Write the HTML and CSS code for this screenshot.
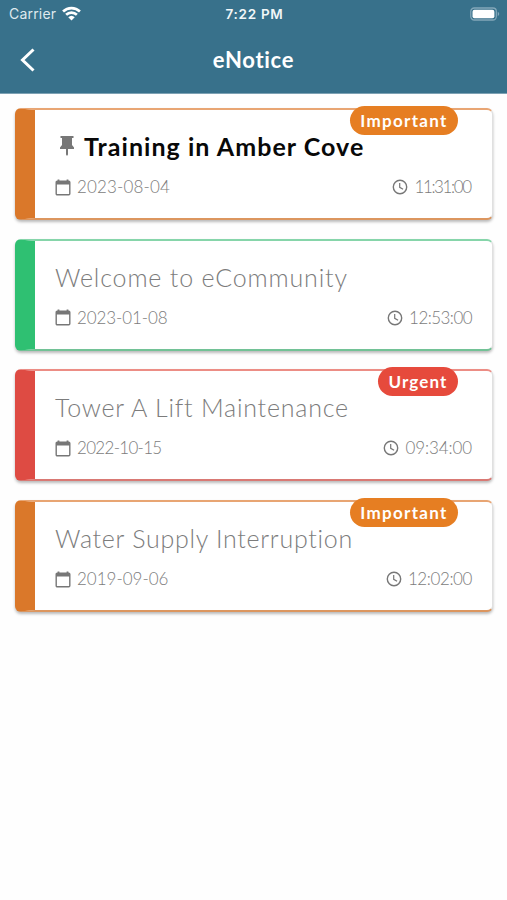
FILE: index.html
```html
<!DOCTYPE html>
<html lang="en">
<head>
<meta charset="utf-8">
<title>eNotice</title>
<link rel="stylesheet" href="styles.css">
</head>
<body>
<svg class="defs" aria-hidden="true">
  <symbol id="cal" viewBox="0 0 16 17"><path d="M2.2 2.2h11.6a1 1 0 0 1 1 1v11.6a1 1 0 0 1-1 1H2.2a1 1 0 0 1-1-1V3.200a1 1 0 0 1 1-1z" fill="none" stroke="currentColor" stroke-width="1.4"/><path d="M1 2h14v3.600H1zM2.600.5h1.800v2H2.600zM11.600.5h1.800v2h-1.800z" fill="currentColor"/></symbol>
  <symbol id="clock" viewBox="0 0 16 16"><circle cx="8" cy="8" r="6.700" fill="none" stroke="currentColor" stroke-width="1.4"/><path d="M7.700 4v4.300l3.400 2" fill="none" stroke="currentColor" stroke-width="1.200"/></symbol>
</svg>
<header class="top">
  <div class="status">
    <div class="carrier"><span>Carrier</span>
      <svg class="wifi" viewBox="0 0 18 14"><g fill="none" stroke="#fff" stroke-width="2.500"><path d="M1 5.100a11.500 11.500 0 0 1 16 0"/><path d="M3.900 8.200a7.300 7.300 0 0 1 10.200 0"/></g><path d="M5.900 10.500a4.500 4.500 0 0 1 6.200 0L9 13.600z" fill="#fff"/></svg>
    </div>
    <div class="time">7:22 PM</div>
    <svg class="battery" viewBox="0 0 31 14"><rect x=".8" y=".8" width="26.400" height="12.400" rx="3.600" fill="none" stroke="#83a7b9" stroke-width="1.300"/><rect x="2.600" y="2.600" width="22.600" height="8.800" rx="2" fill="#fff"/><path d="M28.700 4.700q3 2.300 0 4.600z" fill="#83a7b9"/></svg>
  </div>
  <div class="nav">
    <svg class="back" viewBox="0 0 16 26"><path d="M13.500 2.500L2.500 13l11 10.500" fill="none" stroke="#fff" stroke-width="3"/></svg>
    <h1>eNotice</h1>
  </div>
</header>
<main class="list">
  <article class="card orange pinned">
    <span class="badge important">Important</span>
    <h2><svg class="pin" viewBox="0 0 16 22"><path d="M1.500 1h13v2H13v7l2 2.500V14H9v5.500L8 21l-1-1.500V14H1v-1.500L3 10V3H1.500z" fill="#777"/></svg><span class="t1">Training in Amber Cove</span></h2>
    <div class="meta"><span class="item"><svg class="cal"><use href="#cal"/></svg><span class="date d1">2023-08-04</span></span><span class="item"><svg class="clock"><use href="#clock"/></svg><span class="clk c1">11:31:00</span></span></div>
  </article>
  <article class="card green">
    <h2><span class="t2">Welcome to eCommunity</span></h2>
    <div class="meta"><span class="item"><svg class="cal"><use href="#cal"/></svg><span class="date d2">2023-01-08</span></span><span class="item"><svg class="clock"><use href="#clock"/></svg><span class="clk c2">12:53:00</span></span></div>
  </article>
  <article class="card red">
    <span class="badge urgent">Urgent</span>
    <h2><span class="t3">Tower A Lift Maintenance</span></h2>
    <div class="meta"><span class="item"><svg class="cal"><use href="#cal"/></svg><span class="date d3">2022-10-15</span></span><span class="item"><svg class="clock"><use href="#clock"/></svg><span class="clk c3">09:34:00</span></span></div>
  </article>
  <article class="card orange">
    <span class="badge important">Important</span>
    <h2><span class="t4">Water Supply Interruption</span></h2>
    <div class="meta"><span class="item"><svg class="cal"><use href="#cal"/></svg><span class="date d4">2019-09-06</span></span><span class="item"><svg class="clock"><use href="#clock"/></svg><span class="clk c4">12:02:00</span></span></div>
  </article>
</main>
</body>
</html>
```
FILE: styles.css
```css
* { box-sizing: border-box; }
body { margin: 0; min-height: 900px; background: #fefefe; font-family: Lato, "Liberation Sans", sans-serif; }
.defs { position: absolute; width: 0; height: 0; }
svg { flex: none; display: block; }
.top { height: 94px; background: #38718b; color: #fff; border-bottom: 1px solid #7da1b3; }
.status { height: 27px; padding: 0 7px 0 9px; display: grid; grid-template-columns: 1fr auto 1fr; align-items: center; font: 14px Inter, sans-serif; }
.carrier { display: flex; align-items: center; gap: 6px; color: #dfe9ee; letter-spacing: 0.2px; }
.wifi { width: 19px; height: 15px; }
.time { font-weight: 600; font-size: 13.5px; letter-spacing: 0.7px; color: #f1f6f8; }
.battery { width: 30px; height: 14px; justify-self: end; }
.nav { height: 65px; padding: 0 20px; display: grid; grid-template-columns: 16px 1fr 16px; align-items: center; }
.back { width: 16px; height: 26px; }
h1 { margin: 0; text-align: center; font-size: 22px; line-height: 26px; font-weight: 700; letter-spacing: 0.7px; }
.list { padding: 14px 14px 0 15px; display: flex; flex-direction: column; gap: 18.7px; }
.card { position: relative; height: 112px; padding: 20px 20px 0 20px; border: 2px solid; border-left-width: 20px; border-right: 1px solid #ddd; border-radius: 6px; background: #fff; box-shadow: 0 2px 3px rgba(0,0,0,.27); color: #7c7c7c; }
.orange { border-color: #e8a573 #e0e0e0 #dc965f #da782a; }
.green { border-color: #86d5aa #e0e0e0 #72c296 #2fc072; }
.red { border-color: #ec8d85 #e0e0e0 #d97974 #de4b43; }
h2 { margin: 0; height: 32px; display: flex; align-items: center; font-size: 25px; line-height: 32px; font-weight: 300; white-space: nowrap; font-variant-ligatures: none; }
.pinned h2 { font-weight: 700; color: #080808; }
.pin { width: 16px; height: 22px; margin: 0 9px 0 4px; }
.t1 { letter-spacing: 1.05px; }
.t2 { letter-spacing: 0.83px; }
.t3 { letter-spacing: 0.78px; }
.t4 { letter-spacing: 0.73px; }
.meta { margin-top: 15px; height: 20px; display: flex; justify-content: space-between; font-size: 17px; line-height: 20px; font-weight: 300; }
.item { display: flex; align-items: center; gap: 6px; }
.d1 { letter-spacing: 0.15px; }
.d2 { letter-spacing: -0.1px; }
.d3 { letter-spacing: -0.7px; }
.c1 { letter-spacing: -1.4px; margin-right: 1.4px; }
.c2 { letter-spacing: -0.55px; }
.c3 { letter-spacing: -0.1px; }
.c4 { letter-spacing: -0.4px; }
.cal { width: 16px; height: 17px; color: #777; }
.clock { width: 16px; height: 16px; color: #777; }
.badge { position: absolute; right: 34px; top: -4px; height: 29px; border-radius: 15px; color: #fff; font-size: 17px; line-height: 29px; font-weight: 700; text-align: center; }
.important { width: 108px; background: #e67e22; letter-spacing: 1.3px; }
.urgent { width: 80px; background: #e64a3c; letter-spacing: 1.1px; }
```
